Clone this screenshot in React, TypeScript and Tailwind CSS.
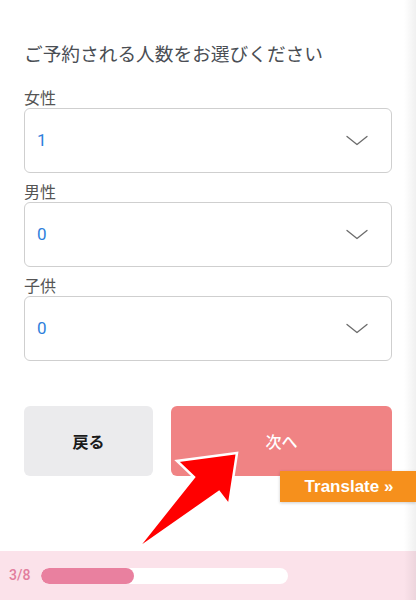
import React from "react";

const jp = { fontFamily: '"Noto Sans CJK JP", "Noto Sans", sans-serif' } as React.CSSProperties;

function Chevron() {
  return (
    <svg width="22" height="11" viewBox="0 0 22 11" fill="none">
      <path d="M1 1.5 L11 9.5 L21 1.5" stroke="#6b6b6b" strokeWidth="1.3" strokeLinecap="round" strokeLinejoin="round" />
    </svg>
  );
}

function Field({ label, value }: { label: string; value: string }) {
  return (
    <div className="flex flex-col">
      <div className="h-[29px] pt-[7px] text-[16px] leading-[22px] text-[#555555]" style={jp}>
        {label}
      </div>
      <div className="h-[65px] rounded-[6px] border border-[#cfcfcf] bg-white flex items-center justify-between pl-[12px] pr-[23px]">
        <span className="text-[17px] text-[#2f7fdc]" style={{ fontFamily: 'Roboto, "Liberation Sans", sans-serif' }}>
          {value}
        </span>
        <Chevron />
      </div>
    </div>
  );
}

export default function App() {
  return (
    <div className="relative w-[416px] h-[600px] overflow-hidden bg-white flex flex-col">
      <div className="px-6 pt-[40px] flex flex-col">
        <div className="text-[18.7px] leading-[26px] text-[#4a4e54] mb-[13px]" style={jp}>
          ご予約される人数をお選びください
        </div>
        <Field label="女性" value="1" />
        <Field label="男性" value="0" />
        <Field label="子供" value="0" />
        <div className="mt-[45px] flex gap-[18px]">
          <div className="w-[129px] h-[70px] rounded-[6px] bg-[#ebebed] flex items-center justify-center text-[16px] font-bold text-[#1a1a1a]" style={jp}>
            戻る
          </div>
          <div className="flex-1 h-[70px] rounded-[6px] bg-[#f08384] flex items-center justify-center text-[16px] font-medium text-white" style={jp}>
            次へ
          </div>
        </div>
      </div>

      <div className="mt-auto h-[49px] bg-[#fbe2ea] flex items-center pl-[9px]">
        <span className="text-[14px] font-medium text-[#e27d9d] w-[32px]" style={{ fontFamily: 'Roboto, "Liberation Sans", sans-serif' }}>
          3/8
        </span>
        <div className="w-[247px] h-[16px] rounded-full bg-white overflow-hidden">
          <div className="h-full w-[93px] rounded-full bg-[#e9809f]" />
        </div>
      </div>

      {/* right edge shadow */}
      <div className="pointer-events-none absolute top-0 right-0 h-full w-[12px] bg-gradient-to-r from-[rgba(0,0,0,0)] to-[rgba(0,0,0,0.06)]" />

      {/* translate badge */}
      <div
        className="absolute left-[280px] top-[471px] w-[136px] h-[31px] bg-[#f6901c] flex items-center justify-center pl-[2px] text-white font-bold text-[17px] shadow-[0_1px_3px_rgba(0,0,0,0.2)]"
        style={{ fontFamily: '"Liberation Sans", Arial, sans-serif' }}
      >
        Translate »
      </div>

      {/* red arrow */}
      <svg className="pointer-events-none absolute left-0 top-0" width="416" height="600" viewBox="0 0 416 600">
        <polygon
          points="237,453 177,461 194,477 136,550 219,492 229,505"
          fill="#ff0000"
          stroke="#ffffff"
          strokeWidth="2.5"
          strokeLinejoin="miter"
        />
      </svg>
    </div>
  );
}
